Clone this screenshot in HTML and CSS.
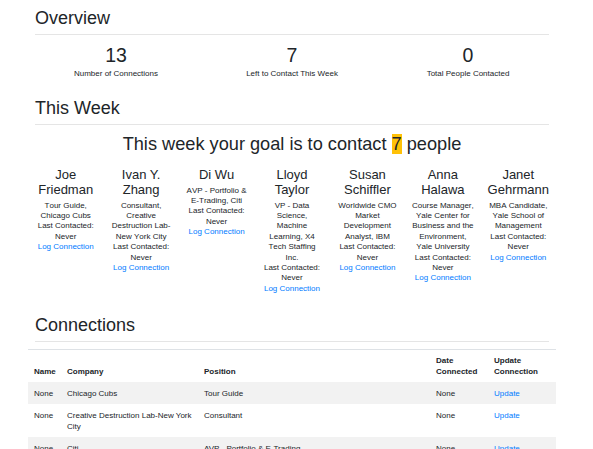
FILE: index.html
```html
<!DOCTYPE html>
<html lang="en">
<head>
<meta charset="utf-8">
<title>Networking Dashboard</title>
<link rel="stylesheet" href="styles.css">
</head>
<body>
<main class="page">
  <h2 class="section-title">Overview</h2>
  <hr class="rule">
  <div class="stats">
    <div class="stat"><div class="stat-value">13</div><div class="stat-label">Number of Connections</div></div>
    <div class="stat"><div class="stat-value">7</div><div class="stat-label">Left to Contact This Week</div></div>
    <div class="stat"><div class="stat-value">0</div><div class="stat-label">Total People Contacted</div></div>
  </div>

  <h2 class="section-title week-title">This Week</h2>
  <hr class="rule">
  <h3 class="goal">This week your goal is to contact <span class="goal-count">7</span> people</h3>
  <div class="people">
    <div class="person">
      <h4 class="person-name">Joe Friedman</h4>
      <p class="person-info">Tour Guide, Chicago Cubs<br>Last Contacted: Never<br><a href="#" class="link">Log Connection</a></p>
    </div>
    <div class="person">
      <h4 class="person-name">Ivan Y. Zhang</h4>
      <p class="person-info">Consultant, Creative Destruction Lab-New York City<br>Last Contacted: Never<br><a href="#" class="link">Log Connection</a></p>
    </div>
    <div class="person">
      <h4 class="person-name">Di Wu</h4>
      <p class="person-info">AVP - Portfolio &amp; E-Trading, Citi<br>Last Contacted: Never<br><a href="#" class="link">Log Connection</a></p>
    </div>
    <div class="person">
      <h4 class="person-name">Lloyd Taylor</h4>
      <p class="person-info">VP - Data Science, Machine Learning, X4 Tech Staffing Inc.<br>Last Contacted: Never<br><a href="#" class="link">Log Connection</a></p>
    </div>
    <div class="person">
      <h4 class="person-name">Susan Schiffler</h4>
      <p class="person-info">Worldwide CMO Market Development Analyst, IBM<br>Last Contacted: Never<br><a href="#" class="link">Log Connection</a></p>
    </div>
    <div class="person">
      <h4 class="person-name">Anna Halawa</h4>
      <p class="person-info">Course Manager, Yale Center for Business and the Environment, Yale University<br>Last Contacted: Never<br><a href="#" class="link">Log Connection</a></p>
    </div>
    <div class="person">
      <h4 class="person-name">Janet Gehrmann</h4>
      <p class="person-info">MBA Candidate, Yale School of Management<br>Last Contacted: Never<br><a href="#" class="link">Log Connection</a></p>
    </div>
  </div>

  <h2 class="section-title conn-title">Connections</h2>
  <hr class="rule">
  <table class="conn-table">
    <colgroup>
      <col class="c-name"><col class="c-company"><col class="c-position"><col class="c-date"><col class="c-update">
    </colgroup>
    <thead>
      <tr><th>Name</th><th>Company</th><th>Position</th><th>Date Connected</th><th>Update Connection</th></tr>
    </thead>
    <tbody>
      <tr><td>None</td><td>Chicago Cubs</td><td>Tour Guide</td><td>None</td><td><a href="#" class="link">Update</a></td></tr>
      <tr><td>None</td><td>Creative Destruction Lab-New York City</td><td>Consultant</td><td>None</td><td><a href="#" class="link">Update</a></td></tr>
      <tr><td>None</td><td>Citi</td><td>AVP - Portfolio &amp; E-Trading</td><td>None</td><td><a href="#" class="link">Update</a></td></tr>
      <tr><td>None</td><td>X4 Tech Staffing Inc.</td><td>VP - Data Science, Machine Learning</td><td>None</td><td><a href="#" class="link">Update</a></td></tr>
      <tr><td>None</td><td>IBM</td><td>Worldwide CMO Market Development Analyst</td><td>None</td><td><a href="#" class="link">Update</a></td></tr>
      <tr><td>None</td><td>Yale Center for Business and the Environment, Yale University</td><td>Course Manager</td><td>None</td><td><a href="#" class="link">Update</a></td></tr>
      <tr><td>None</td><td>Yale School of Management</td><td>MBA Candidate</td><td>None</td><td><a href="#" class="link">Update</a></td></tr>
    </tbody>
  </table>
</main>
</body>
</html>
```

FILE: styles.css
```css
* { box-sizing: border-box; }

body {
  margin: 0;
  background: #fff;
  color: #212529;
  font-family: "Liberation Sans", Arial, sans-serif;
}

.page {
  padding: 7px 44px 24px 35px;
}

.section-title {
  margin: 0;
  font-size: 18px;
  line-height: 22px;
  font-weight: 500;
}

.week-title { margin-top: 18.6px; }
.conn-title { margin-top: 19.3px; }

.rule {
  margin: 5.3px 0 0;
  border: 0;
  border-top: 1px solid rgba(0, 0, 0, 0.1);
}

.stats {
  display: grid;
  grid-template-columns: repeat(3, 1fr);
  margin: 8.3px -7px 0;
  text-align: center;
}

.stat-value {
  font-size: 19.5px;
  line-height: 23.4px;
  font-weight: 500;
}

.stat-label {
  margin-top: 1.5px;
  font-size: 8px;
  line-height: 10px;
}

.goal {
  margin: 7.7px 0 0;
  font-size: 18.2px;
  line-height: 22px;
  font-weight: 500;
  text-align: center;
}

.goal-count { background: #ffc107; }

.people {
  display: grid;
  grid-template-columns: repeat(7, 1fr);
  margin: 11.7px -7px 0;
  text-align: center;
}

.person { padding: 0 6.7px; }

.person-name {
  margin: 0;
  font-size: 13px;
  line-height: 15px;
  font-weight: 500;
}

.person-info {
  margin: 3.8px 0 0;
  font-size: 8px;
  line-height: 10.4px;
  font-kerning: none;
}

.link {
  color: #007bff;
  text-decoration: none;
}

.conn-table {
  width: 528px;
  margin: 7.6px -7px 0;
  border-collapse: collapse;
  table-layout: fixed;
  font-size: 8px;
  line-height: 10.3px;
}

.c-name { width: 33px; }
.c-company { width: 137px; }
.c-position { width: 232px; }
.c-date { width: 58px; }
.c-update { width: 68px; }

.conn-table th {
  padding: 6px 6px 5px;
  border-top: 1px solid #dee2e6;
  text-align: left;
  vertical-align: bottom;
  font-weight: 700;
}

.conn-table td {
  padding: 7px 6px 5px;
  vertical-align: top;
}

.conn-table tbody tr:nth-child(odd) { background: #f2f2f2; }
```
